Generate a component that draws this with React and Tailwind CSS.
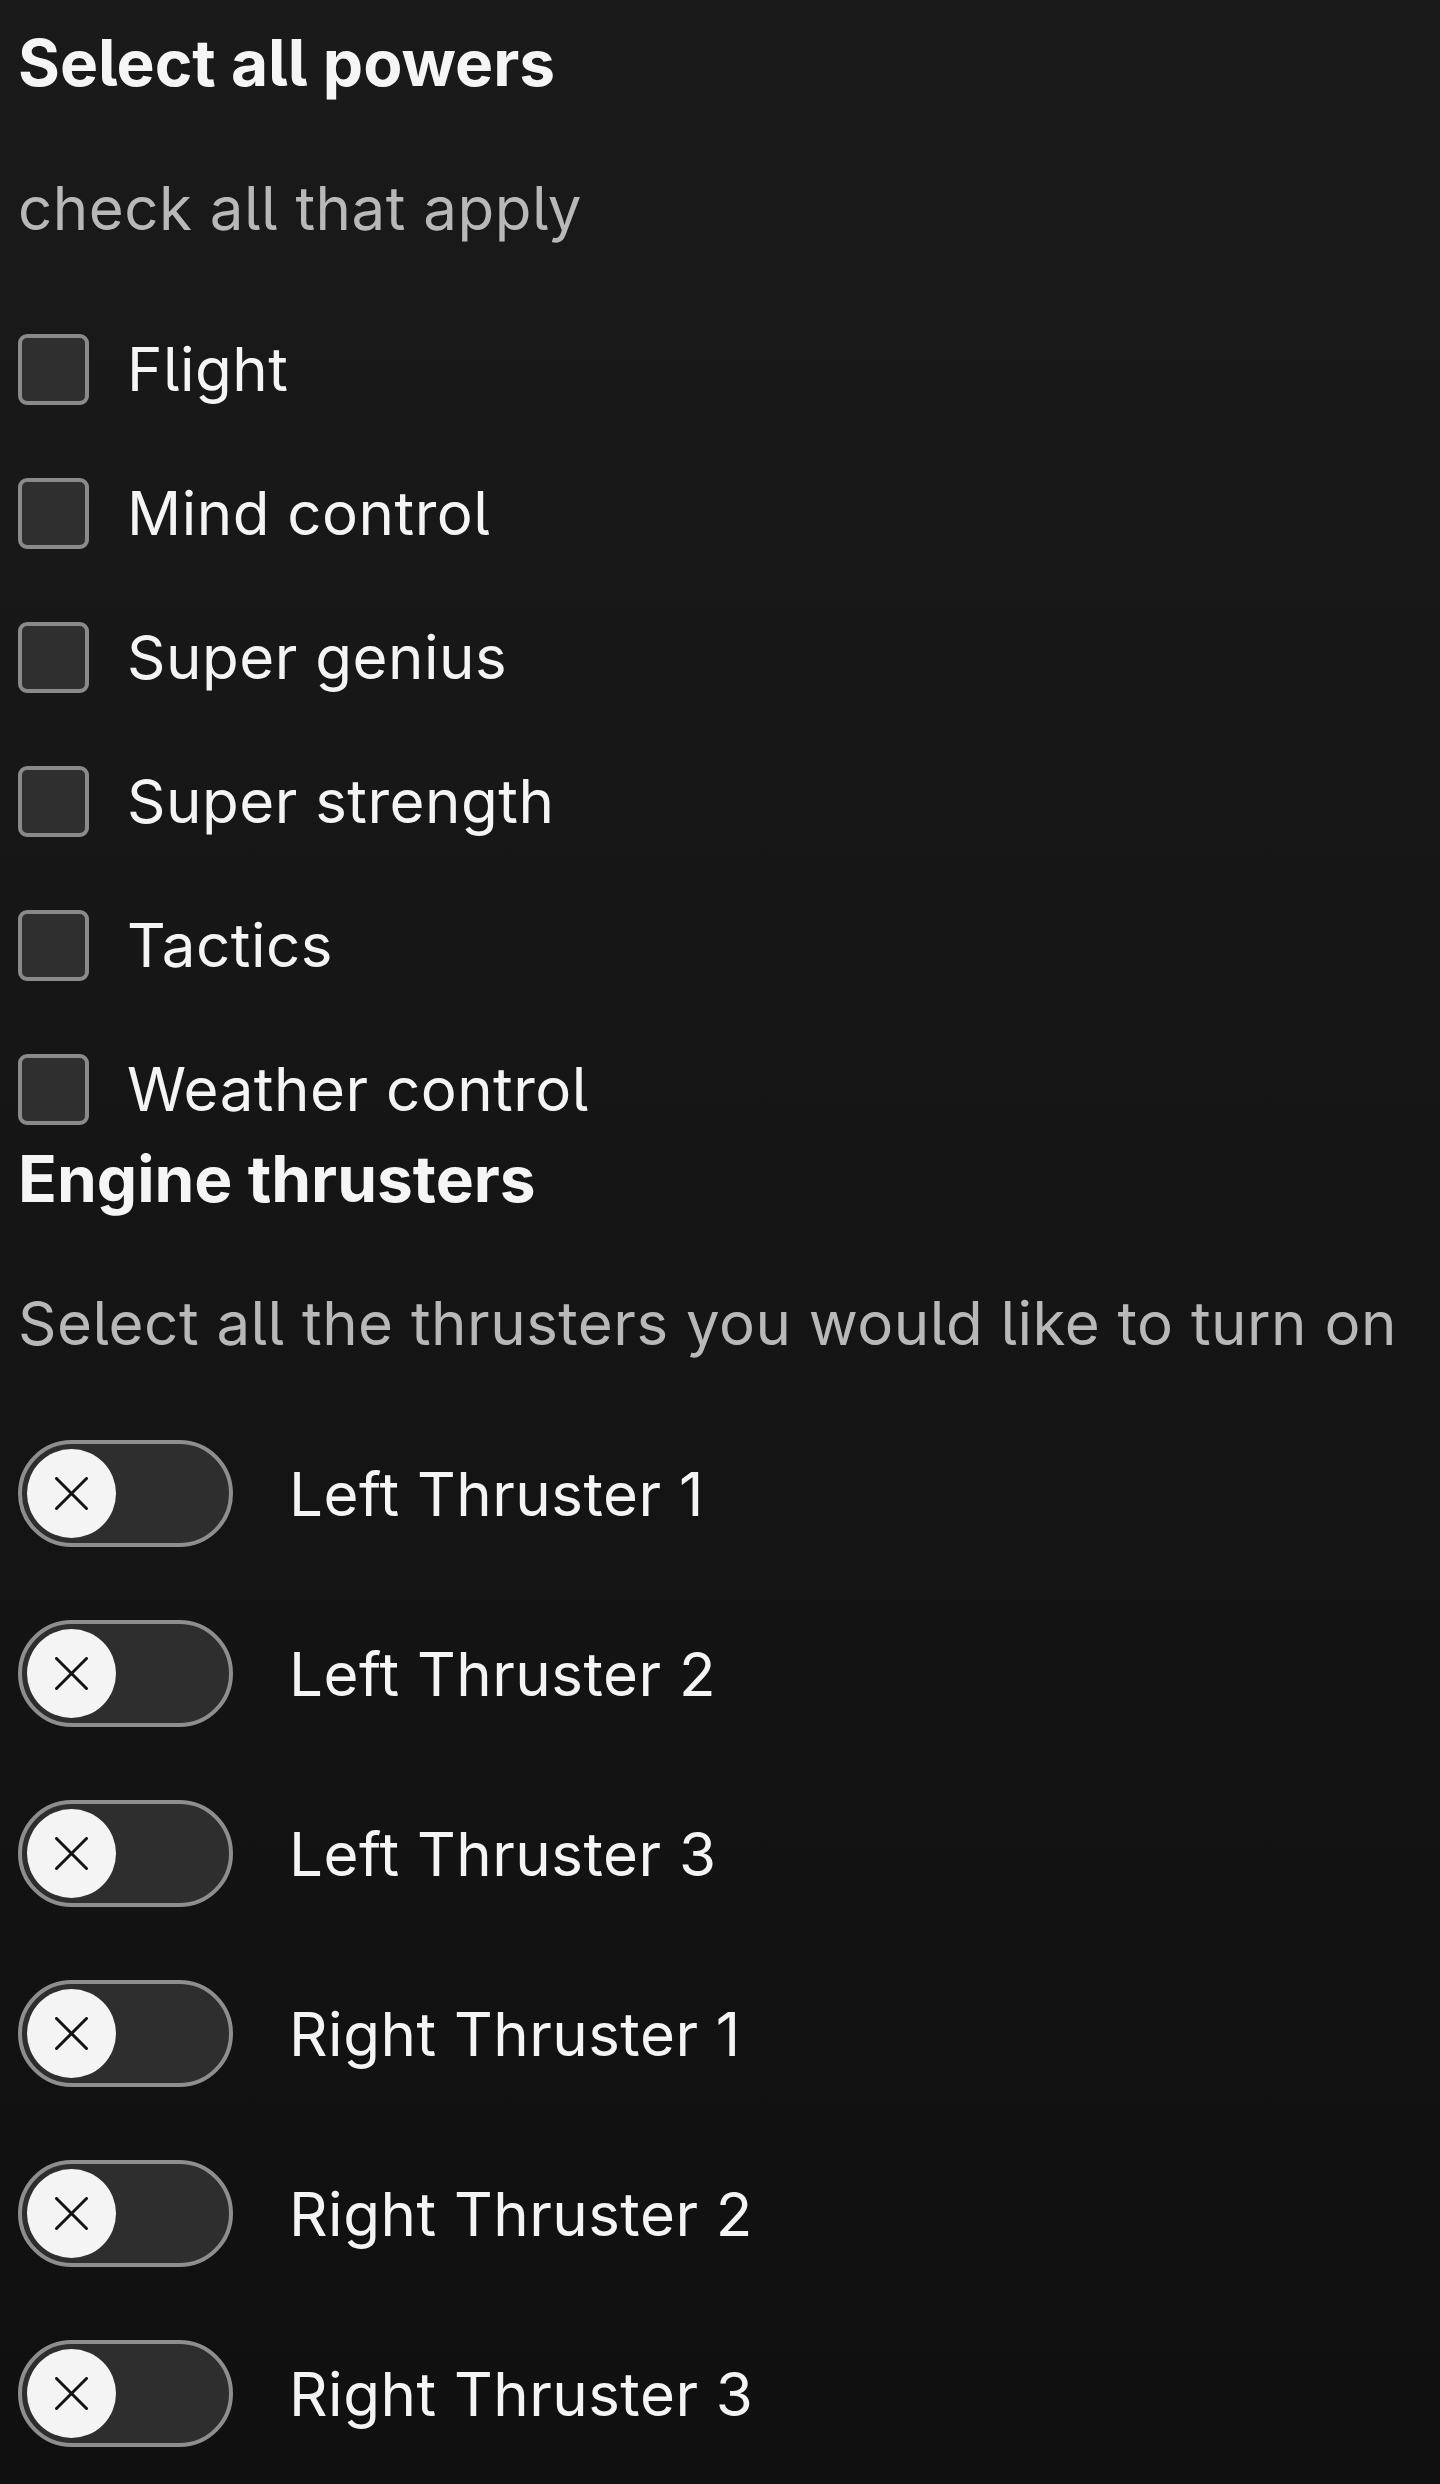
import React, { useState } from "react";

const powers = ["Flight", "Mind control", "Super genius", "Super strength", "Tactics", "Weather control"];
const thrusters = ["Left Thruster 1", "Left Thruster 2", "Left Thruster 3", "Right Thruster 1", "Right Thruster 2", "Right Thruster 3"];

const font = "font-['Inter','Noto_Sans',sans-serif] [font-feature-settings:'cv05']";

const Checkbox = ({ label, checked, onChange }) => (
    <label className="flex items-center gap-[38px] h-[72px] cursor-pointer">
        <span className="w-[71px] h-[71px] shrink-0 rounded-[9px] border-4 border-[#8a8a8a] bg-[#2f2f2f]" />
        <input type="checkbox" className="hidden" checked={checked} onChange={onChange} />
        <span className="text-[60px] leading-none tracking-[0.5px] text-[#f4f4f4]">{label}</span>
    </label>
);

const Toggle = ({ label, on, onClick }) => (
    <div className="flex items-center gap-[56px] h-[107px]">
        <button
            onClick={onClick}
            className="w-[215px] h-[107px] shrink-0 rounded-full border-4 border-[#8e8e8e] bg-[#2e2e2e] flex items-center pl-[5px]"
        >
            <span className="w-[89px] h-[89px] rounded-full bg-[#f4f4f4] flex items-center justify-center">
                <svg width="33" height="33" viewBox="0 0 33 33" fill="none" stroke="#141414" strokeWidth="3" strokeLinecap="round">
                    <line x1="1.5" y1="1.5" x2="31.5" y2="31.5" />
                    <line x1="31.5" y1="1.5" x2="1.5" y2="31.5" />
                </svg>
            </span>
        </button>
        <span className="text-[60px] leading-none tracking-[0.5px] text-[#f4f4f4]">{label}</span>
    </div>
);

export default function App() {
    const [checked, setChecked] = useState({});
    const [on, setOn] = useState({});

    return (
        <div className={`min-h-[2484px] w-full bg-linear-to-b from-[#1a1a1a] to-[#101010] px-[18px] ${font}`}>
            <h2 className="h-[125px] flex items-center text-[64px] font-bold leading-none text-[#f5f5f5]">Select all powers</h2>
            <p className="h-[165px] flex items-center text-[60px] leading-none tracking-[0.5px] text-[#b8b8b8]">check all that apply</p>
            <div className="mt-[43px] flex flex-col gap-[72px]">
                {powers.map((p) => (
                    <Checkbox
                        key={p}
                        label={p}
                        checked={!!checked[p]}
                        onChange={() => setChecked({ ...checked, [p]: !checked[p] })}
                    />
                ))}
            </div>
            <h2 className="h-[108px] flex items-center text-[64px] font-bold leading-none text-[#f5f5f5]">Engine thrusters</h2>
            <p className="h-[180px] flex items-center text-[60px] leading-none tracking-[0.5px] text-[#b8b8b8] whitespace-nowrap">
                Select all the thrusters you would like to turn on
            </p>
            <div className="mt-[27px] flex flex-col gap-[73px]">
                {thrusters.map((t) => (
                    <Toggle key={t} label={t} on={!!on[t]} onClick={() => setOn({ ...on, [t]: !on[t] })} />
                ))}
            </div>
        </div>
    );
}
